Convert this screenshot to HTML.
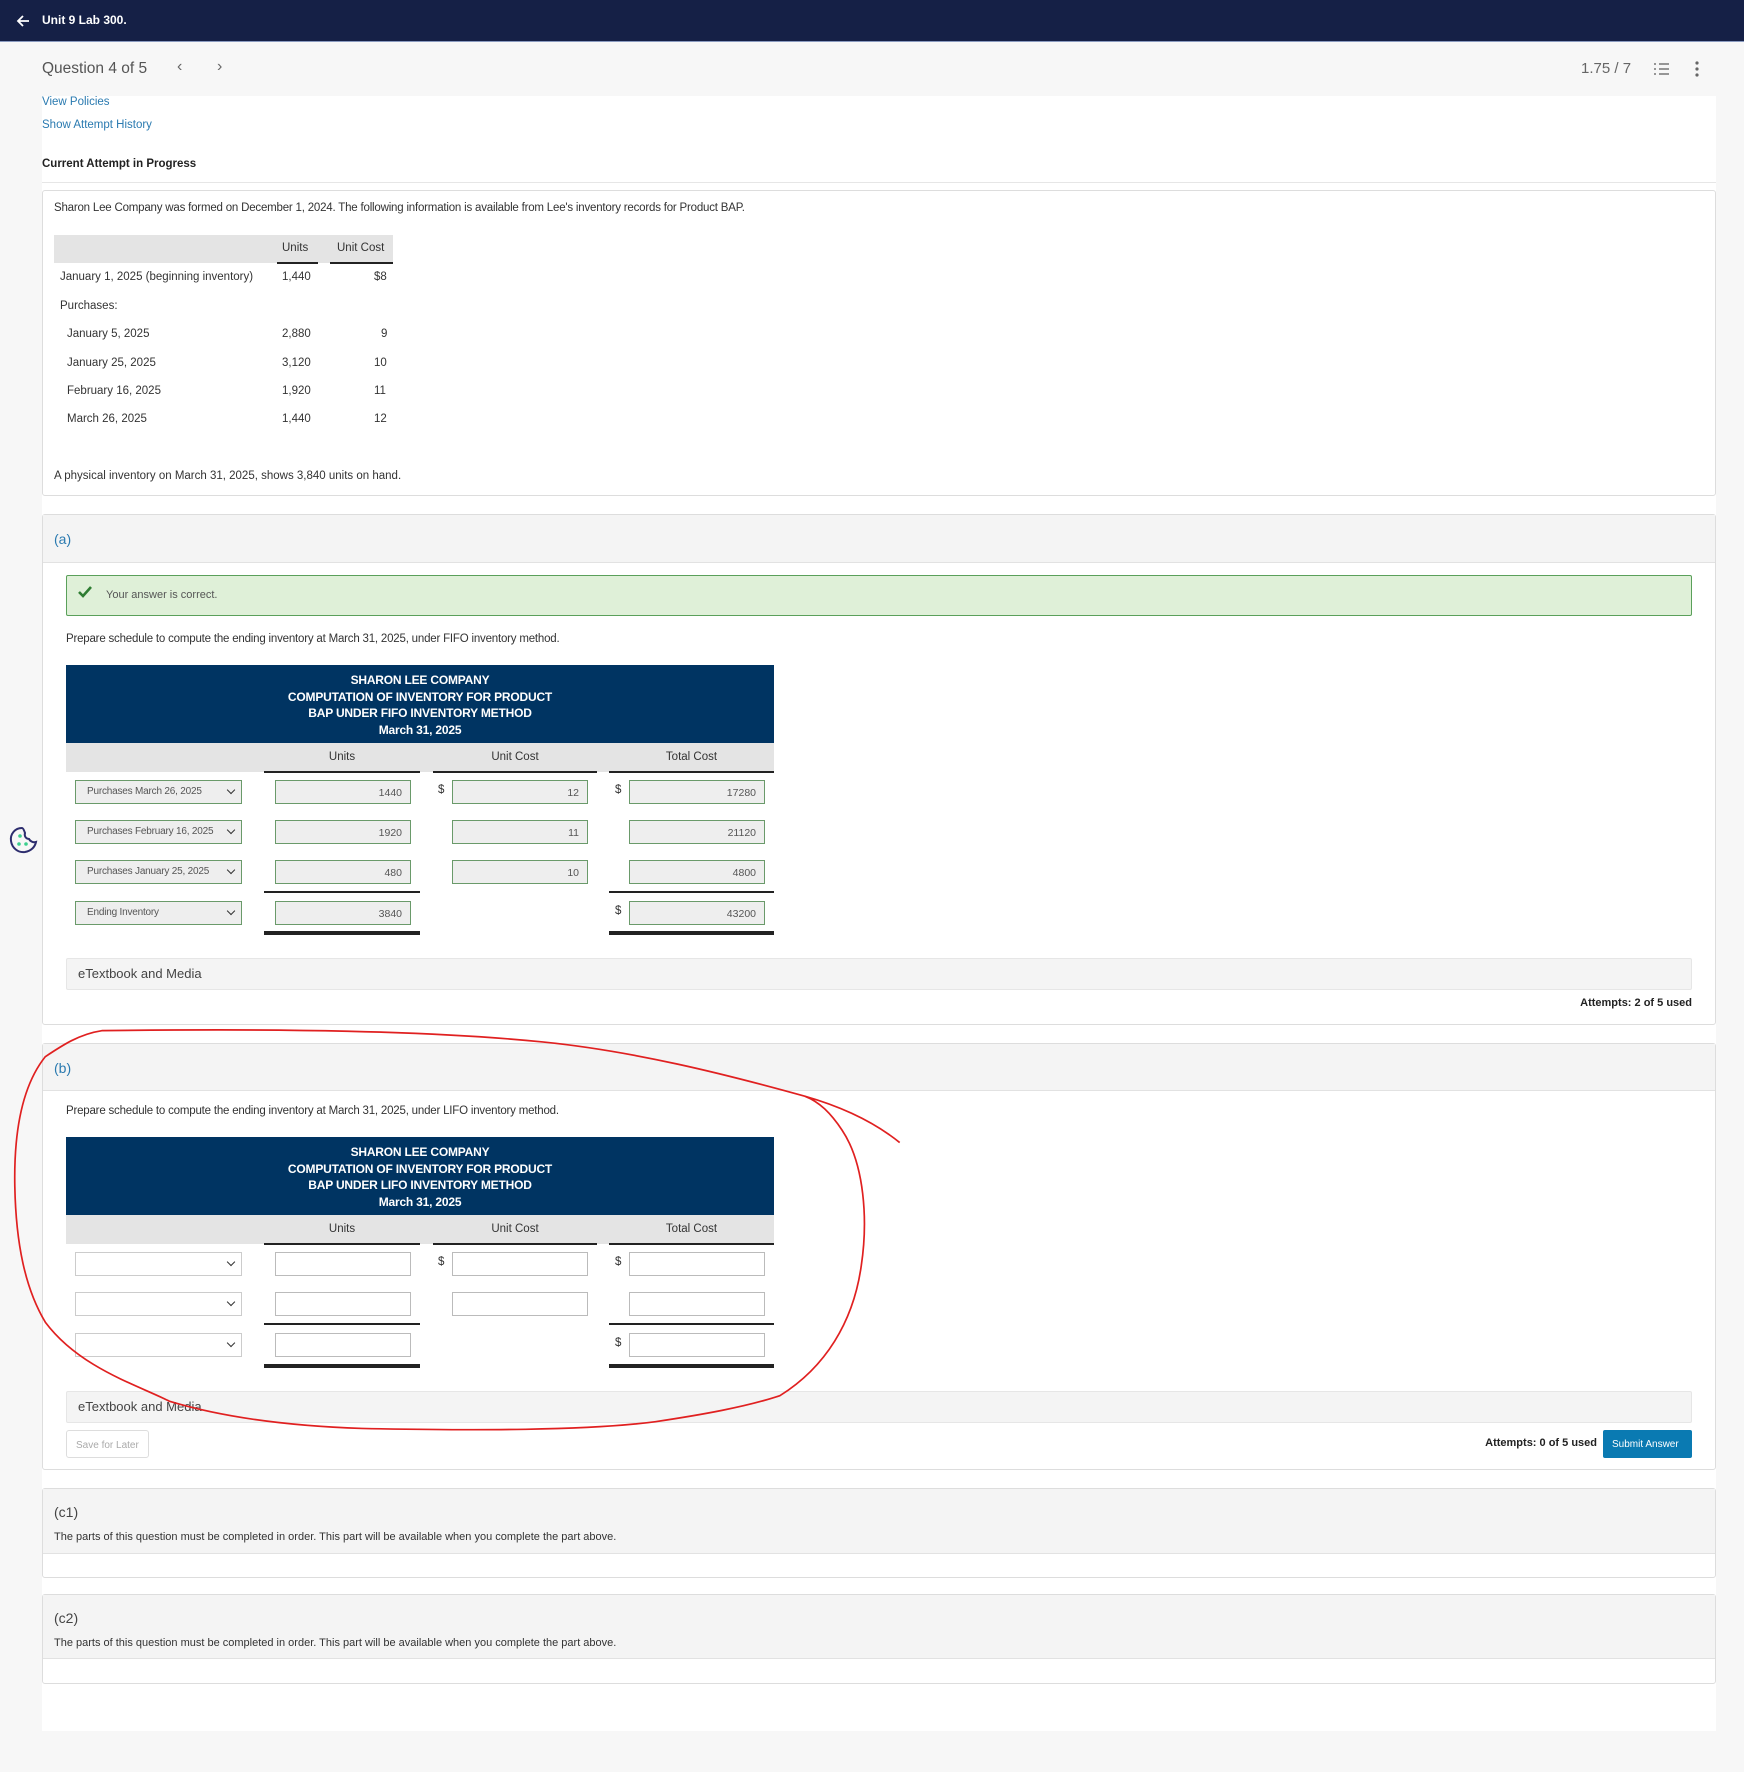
<!DOCTYPE html>
<html><head><meta charset="utf-8"><style>
*{box-sizing:border-box;margin:0;padding:0}
body{width:1744px;height:1772px;background:#f7f7f7;font-family:"Liberation Sans",sans-serif;color:#333;position:relative;overflow:hidden}
.a{position:absolute}
.t{font-size:11.5px;white-space:nowrap}
.hdr{left:0;top:0;width:1744px;height:42px;background:#152046;border-bottom:1px solid #8a9bc0}
.panel{left:42px;top:96px;width:1674px;height:1635px;background:#fff}
.box{border:1px solid #ddd;border-radius:3px;background:#fff}
.gray{background:#f4f4f4}
.blue{background:#003462;color:#fff;font-weight:bold;font-size:12px;text-align:center;line-height:16.5px;padding-top:7px;letter-spacing:-0.2px}
.colh{background:#e4e4e4;font-size:12px;color:#333}
.sel{width:167px;height:24px;border:1px solid #aaa;background:#eee;font-size:10px;color:#555;padding:5px 0 0 11px;white-space:nowrap;overflow:hidden;letter-spacing:-0.2px}
.sel.ok{border:1.5px solid #6a9a6a}
.sel::after{content:"";position:absolute;right:7px;top:6px;width:5px;height:5px;border-right:1.5px solid #333;border-bottom:1.5px solid #333;transform:rotate(45deg)}
.inp{width:136px;height:24px;border:1px solid #bbb;background:#fff;font-size:10.5px;color:#555;text-align:right;padding:6px 8px 0 0}
.inp.ok{border:1.5px solid #6a9a6a;background:#eee}
.ul{height:2px;background:#222}
.dl{height:4px;border-top:2px solid #222;border-bottom:2px solid #222}
.lk{color:#2a7ab0;font-size:11.5px}
</style></head><body>
<div class="a hdr"></div>
<svg class="a" style="left:15px;top:13px" width="16" height="16" viewBox="0 0 16 16"><path d="M14 8H3M8 3L3 8l5 5" stroke="#fff" stroke-width="1.8" fill="none"/></svg>
<div class="a" style="left:42px;top:13px;color:#fff;font-weight:bold;font-size:12px">Unit 9 Lab 300.</div>

<div class="a" style="left:42px;top:60px;font-size:15.5px;color:#555">Question 4 of 5</div>
<div class="a" style="left:177px;top:58px;font-size:16px;color:#666">‹</div>
<div class="a" style="left:217px;top:58px;font-size:16px;color:#666">›</div>
<div class="a" style="left:1581px;top:60px;font-size:15px;color:#666">1.75 / 7</div>
<svg class="a" style="left:1654px;top:62px" width="16" height="14"><path d="M5 2h10M5 7h10M5 12h10" stroke="#777" stroke-width="1.5"/><path d="M1 1v2M1 6v2M1 11v2" stroke="#777" stroke-width="1.5"/></svg>
<svg class="a" style="left:1694px;top:61px" width="6" height="16"><circle cx="3" cy="2" r="1.6" fill="#666"/><circle cx="3" cy="8" r="1.6" fill="#666"/><circle cx="3" cy="14" r="1.6" fill="#666"/></svg>

<div class="a panel"></div>
<div class="a lk" style="left:42px;top:96px">View Policies</div>
<div class="a lk" style="left:42px;top:119px">Show Attempt History</div>
<div class="a t" style="left:42px;top:158px;font-weight:bold;color:#222">Current Attempt in Progress</div>
<div class="a" style="left:42px;top:182px;width:1674px;height:1px;background:#e6e6e6"></div>

<div class="a box" style="left:42px;top:190px;width:1674px;height:306px"></div>
<div class="a t" style="left:54px;top:202px;letter-spacing:-0.2px">Sharon Lee Company was formed on December 1, 2024. The following information is available from Lee's inventory records for Product BAP.</div>
<div class="a" style="left:54px;top:235px;width:339px;height:28px;background:#e4e4e4"></div>
<div class="a t" style="left:282px;top:242px">Units</div>
<div class="a t" style="left:337px;top:242px">Unit Cost</div>
<div class="a" style="left:277px;top:262px;width:41px;height:1.5px;background:#222"></div>
<div class="a" style="left:330px;top:262px;width:63px;height:1.5px;background:#222"></div>
<div class="a t" style="left:60px;top:271px">January 1, 2025 (beginning inventory)</div>
<div class="a t" style="left:282px;top:271px">1,440</div><div class="a t" style="left:374px;top:271px">$8</div>
<div class="a t" style="left:60px;top:300px">Purchases:</div>
<div class="a t" style="left:67px;top:328px">January 5, 2025</div><div class="a t" style="left:282px;top:328px">2,880</div><div class="a t" style="left:381px;top:328px">9</div>
<div class="a t" style="left:67px;top:357px">January 25, 2025</div><div class="a t" style="left:282px;top:357px">3,120</div><div class="a t" style="left:374px;top:357px">10</div>
<div class="a t" style="left:67px;top:385px">February 16, 2025</div><div class="a t" style="left:282px;top:385px">1,920</div><div class="a t" style="left:374px;top:385px">11</div>
<div class="a t" style="left:67px;top:413px">March 26, 2025</div><div class="a t" style="left:282px;top:413px">1,440</div><div class="a t" style="left:374px;top:413px">12</div>
<div class="a t" style="left:54px;top:470px">A physical inventory on March 31, 2025, shows 3,840 units on hand.</div>

<!-- (a) -->
<div class="a box" style="left:42px;top:514px;width:1674px;height:511px"></div>
<div class="a gray" style="left:43px;top:515px;width:1672px;height:48px;border-bottom:1px solid #e2e2e2"></div>
<div class="a" style="left:54px;top:531px;font-size:14px;color:#2a7ab0">(a)</div>
<div class="a" style="left:66px;top:575px;width:1626px;height:41px;background:#dff0d8;border:1px solid #5aa05a;border-radius:2px"></div>
<svg class="a" style="left:78px;top:586px" width="14" height="12"><path d="M1 6l4 4 8-9" stroke="#2e7d32" stroke-width="2.6" fill="none"/></svg>
<div class="a t" style="left:106px;top:589px;font-size:11px;color:#555">Your answer is correct.</div>
<div class="a t" style="left:66px;top:633px;font-size:11.5px;letter-spacing:-0.2px">Prepare schedule to compute the ending inventory at March 31, 2025, under FIFO inventory method.</div>
<div class="a blue" style="left:66px;top:665px;width:708px;height:78px">SHARON LEE COMPANY<br>COMPUTATION OF INVENTORY FOR PRODUCT<br>BAP UNDER FIFO INVENTORY METHOD<br>March 31, 2025</div>
<div class="a colh" style="left:66px;top:743px;width:708px;height:29px"></div>
<div class="a t" style="left:264px;top:751px;width:156px;text-align:center">Units</div>
<div class="a t" style="left:433px;top:751px;width:164px;text-align:center">Unit Cost</div>
<div class="a t" style="left:609px;top:751px;width:165px;text-align:center">Total Cost</div>
<div class="a ul" style="left:264px;top:771px;width:156px"></div>
<div class="a ul" style="left:433px;top:771px;width:164px"></div>
<div class="a ul" style="left:609px;top:771px;width:165px"></div>

<div class="a sel ok" style="left:75px;top:780px">Purchases March 26, 2025</div>
<div class="a inp ok" style="left:275px;top:780px">1440</div>
<div class="a t" style="left:438px;top:784px">$</div>
<div class="a inp ok" style="left:452px;top:780px">12</div>
<div class="a t" style="left:615px;top:784px">$</div>
<div class="a inp ok" style="left:629px;top:780px">17280</div>

<div class="a sel ok" style="left:75px;top:820px">Purchases February 16, 2025</div>
<div class="a inp ok" style="left:275px;top:820px">1920</div>
<div class="a inp ok" style="left:452px;top:820px">11</div>
<div class="a inp ok" style="left:629px;top:820px">21120</div>

<div class="a sel ok" style="left:75px;top:860px">Purchases January 25, 2025</div>
<div class="a inp ok" style="left:275px;top:860px">480</div>
<div class="a inp ok" style="left:452px;top:860px">10</div>
<div class="a inp ok" style="left:629px;top:860px">4800</div>
<div class="a ul" style="left:264px;top:891px;width:156px;height:1.5px"></div>
<div class="a ul" style="left:609px;top:891px;width:165px;height:1.5px"></div>

<div class="a sel ok" style="left:75px;top:901px">Ending Inventory</div>
<div class="a inp ok" style="left:275px;top:901px">3840</div>
<div class="a t" style="left:615px;top:905px">$</div>
<div class="a inp ok" style="left:629px;top:901px">43200</div>
<div class="a dl" style="left:264px;top:931px;width:156px"></div>
<div class="a dl" style="left:609px;top:931px;width:165px"></div>

<div class="a gray" style="left:66px;top:958px;width:1626px;height:32px;border:1px solid #e6e6e6;border-radius:2px"></div>
<div class="a" style="left:78px;top:966px;font-size:13px;color:#444">eTextbook and Media</div>
<div class="a t" style="left:1500px;top:997px;width:192px;text-align:right;font-size:11px;font-weight:bold;color:#222">Attempts: 2 of 5 used</div>

<!-- (b) -->
<div class="a box" style="left:42px;top:1043px;width:1674px;height:427px"></div>
<div class="a gray" style="left:43px;top:1044px;width:1672px;height:47px;border-bottom:1px solid #e2e2e2"></div>
<div class="a" style="left:54px;top:1060px;font-size:14px;color:#2a7ab0">(b)</div>
<div class="a t" style="left:66px;top:1105px;font-size:11.5px;letter-spacing:-0.2px">Prepare schedule to compute the ending inventory at March 31, 2025, under LIFO inventory method.</div>
<div class="a blue" style="left:66px;top:1137px;width:708px;height:78px">SHARON LEE COMPANY<br>COMPUTATION OF INVENTORY FOR PRODUCT<br>BAP UNDER LIFO INVENTORY METHOD<br>March 31, 2025</div>
<div class="a colh" style="left:66px;top:1215px;width:708px;height:29px"></div>
<div class="a t" style="left:264px;top:1223px;width:156px;text-align:center">Units</div>
<div class="a t" style="left:433px;top:1223px;width:164px;text-align:center">Unit Cost</div>
<div class="a t" style="left:609px;top:1223px;width:165px;text-align:center">Total Cost</div>
<div class="a ul" style="left:264px;top:1243px;width:156px"></div>
<div class="a ul" style="left:433px;top:1243px;width:164px"></div>
<div class="a ul" style="left:609px;top:1243px;width:165px"></div>

<div class="a sel" style="left:75px;top:1252px;background:#fff;border-color:#ccc"></div>
<div class="a inp" style="left:275px;top:1252px"></div>
<div class="a t" style="left:438px;top:1256px">$</div>
<div class="a inp" style="left:452px;top:1252px"></div>
<div class="a t" style="left:615px;top:1256px">$</div>
<div class="a inp" style="left:629px;top:1252px"></div>

<div class="a sel" style="left:75px;top:1292px;background:#fff;border-color:#ccc"></div>
<div class="a inp" style="left:275px;top:1292px"></div>
<div class="a inp" style="left:452px;top:1292px"></div>
<div class="a inp" style="left:629px;top:1292px"></div>
<div class="a ul" style="left:264px;top:1323px;width:156px;height:1.5px"></div>
<div class="a ul" style="left:609px;top:1323px;width:165px;height:1.5px"></div>

<div class="a sel" style="left:75px;top:1333px;background:#fff;border-color:#ccc"></div>
<div class="a inp" style="left:275px;top:1333px"></div>
<div class="a t" style="left:615px;top:1337px">$</div>
<div class="a inp" style="left:629px;top:1333px"></div>
<div class="a dl" style="left:264px;top:1364px;width:156px"></div>
<div class="a dl" style="left:609px;top:1364px;width:165px"></div>

<div class="a gray" style="left:66px;top:1391px;width:1626px;height:32px;border:1px solid #e6e6e6;border-radius:2px"></div>
<div class="a" style="left:78px;top:1399px;font-size:13px;color:#444">eTextbook and Media</div>
<div class="a" style="left:66px;top:1430px;width:83px;height:28px;border:1px solid #ddd;border-radius:3px;font-size:10px;color:#aaa;padding:9px 0 0 9px">Save for Later</div>
<div class="a t" style="left:1400px;top:1437px;width:197px;text-align:right;font-size:11px;font-weight:bold;color:#222">Attempts: 0 of 5 used</div>
<div class="a" style="left:1603px;top:1430px;width:89px;height:28px;background:#0a7ab2;border-radius:2px;color:#fff;font-size:10px;padding:9px 0 0 9px">Submit Answer</div>

<!-- c1 c2 -->
<div class="a box" style="left:42px;top:1488px;width:1674px;height:90px"></div>
<div class="a gray" style="left:43px;top:1489px;width:1672px;height:65px;border-bottom:1px solid #e2e2e2"></div>
<div class="a" style="left:54px;top:1504px;font-size:14px;color:#444">(c1)</div>
<div class="a t" style="left:54px;top:1531px;font-size:11px">The parts of this question must be completed in order. This part will be available when you complete the part above.</div>
<div class="a box" style="left:42px;top:1594px;width:1674px;height:90px"></div>
<div class="a gray" style="left:43px;top:1595px;width:1672px;height:64px;border-bottom:1px solid #e2e2e2"></div>
<div class="a" style="left:54px;top:1610px;font-size:14px;color:#444">(c2)</div>
<div class="a t" style="left:54px;top:1637px;font-size:11px">The parts of this question must be completed in order. This part will be available when you complete the part above.</div>

<!-- cookie -->
<svg class="a" style="left:8px;top:826px" width="32" height="30" viewBox="0 0 32 30"><path d="M14 2C7 2 2 8 3 15c1 7 7 12 14 11 6-1 10-5 11-10-3 1-6-1-7-3-3 0-5-3-4-6-1-3-2-5-3-5z" fill="none" stroke="#2d2d6e" stroke-width="2"/><circle cx="12" cy="10" r="1.8" fill="#3ccf8e"/><circle cx="11" cy="18" r="1.8" fill="#3ccf8e"/><circle cx="18" cy="18" r="1.8" fill="#3ccf8e"/></svg>

<!-- red annotation -->
<svg class="a" style="left:0;top:0" width="1744" height="1772" viewBox="0 0 1543 1568"><path d="M796 1011C770 990 740 978 712 970C640 950 560 930 480 922C380 912 250 910 90 912C70 915 55 925 40 935C20 960 12 1000 13 1050C14 1100 22 1140 40 1170C70 1210 120 1225 150 1240C200 1255 260 1262 320 1264C420 1266 520 1266 580 1258C620 1252 660 1245 690 1235C730 1210 755 1170 762 1120C768 1080 765 1030 745 1000C735 985 725 975 712 970" fill="none" stroke="#e02020" stroke-width="1.5"/></svg>
</body></html>
